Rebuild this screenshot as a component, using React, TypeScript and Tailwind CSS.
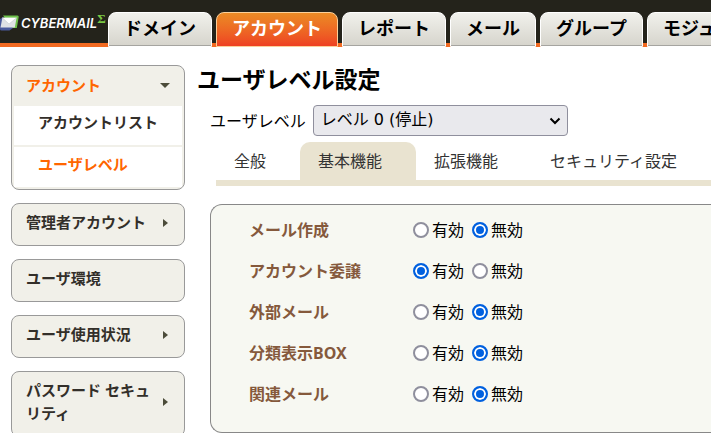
import { useState } from "react";

const mainTabs = ["ドメイン", "アカウント", "レポート", "メール", "グループ", "モジュール"];

const settingTabs = ["全般", "基本機能", "拡張機能", "セキュリティ設定"];

const sideMenus = [
  { label: "管理者アカウント", expandable: true },
  { label: "ユーザ環境", expandable: false },
  { label: "ユーザ使用状況", expandable: true },
  { label: "パスワード セキュリティ", expandable: true },
];

const features = [
  { id: "compose", label: "メール作成", enabled: false },
  { id: "delegate", label: "アカウント委譲", enabled: true },
  { id: "external", label: "外部メール", enabled: false },
  { id: "category", label: "分類表示BOX", enabled: false },
  { id: "related", label: "関連メール", enabled: false },
];

function Logo() {
  return (
    <a href="#" className="flex h-5 w-[106px] shrink-0 items-center text-white" aria-label="CYBERMAIL Σ">
      <svg viewBox="0 0 19 16" className="h-4 w-[19px] shrink-0" aria-hidden="true">
        <path d="M3 0.5H17.5Q19 0.5 18.7 2L16.8 13H12Z" fill="#6cc04a" />
        <path d="M0 4L3 2L13 13L9.5 15.5H1.5Q0 15.5 0 14Z" fill="#4a5a9c" />
        <path d="M2.4 2.8H16.6L14.8 12.6H0.5Z" fill="#dfe1e5" />
        <path d="M2.4 2.8H16.6L9 9Z" fill="#ffffff" />
        <path d="M2.4 2.8L9 9L16.6 2.8" fill="none" stroke="#c3c7ce" strokeWidth="0.6" />
      </svg>
      <span className="ml-0.5 font-['Inter',sans-serif] text-[13px] leading-5 font-semibold italic">CYBERMAIL</span>
      <span className="mb-2 font-['Liberation_Serif',serif] text-[13px] leading-3 font-bold text-[#7ac943]">Σ</span>
    </a>
  );
}

function Header() {
  return (
    <header className="flex h-[47px] items-end overflow-hidden bg-[linear-gradient(#24231b_43px,#f26a21_43px)]">
      <div className="mb-3.5 shrink-0">
        <Logo />
      </div>
      <nav className="ml-0.5 flex shrink-0 gap-1">
        {mainTabs.map((tab, i) => (
          <a
            key={tab}
            href="#"
            className={
              i === 1
                ? "flex h-[35px] items-center rounded-t-lg border border-[#fbd09a] bg-linear-to-b from-[#ea8a25] to-[#ee4023] px-[15px] pb-1 text-lg font-bold text-white"
                : "flex h-[35px] items-center rounded-t-lg border border-white bg-linear-to-b from-[#f1f1ec] to-[#d6d4cc] px-[15px] pb-1 text-lg font-bold text-black shadow-[inset_0_-1px_0_#a5a4a0]"
            }
          >
            {tab}
          </a>
        ))}
      </nav>
    </header>
  );
}

function Sidebar() {
  return (
    <aside className="flex w-[174px] shrink-0 flex-col gap-[13px] text-[15px] font-bold text-[#332f2a]">
      <div className="rounded-lg border border-[#999] bg-[#f1f0e9] px-0.5 pb-0.5">
        <button type="button" aria-expanded="true" className="flex h-10 w-full items-center justify-between pr-3 pb-0.5 pl-3 text-left text-[#ff6600]">
          アカウント
          <svg viewBox="0 0 10 5" className="h-[5px] w-2.5" aria-hidden="true">
            <path d="M0 0H10L5 5Z" fill="#4c4c3a" />
          </svg>
        </button>
        <ul className="flex flex-col gap-0.5">
          <li>
            <a href="#" className="flex h-[39px] items-center bg-white pb-1.5 pl-6">アカウントリスト</a>
          </li>
          <li>
            <a href="#" className="flex h-10 items-center bg-white pb-1.5 pl-6 text-[#ff6600]">ユーザレベル</a>
          </li>
        </ul>
      </div>
      {sideMenus.map((menu) => (
        <button
          key={menu.label}
          type="button"
          className="flex w-full items-center justify-between rounded-lg border border-[#999] bg-[#f1f0e9] pt-[7px] pr-4 pb-[11px] pl-3.5 text-left leading-[23px]"
        >
          <span className="w-[130px]">{menu.label}</span>
          {menu.expandable && (
            <svg viewBox="0 0 5 8" className="h-2 w-[5px] shrink-0" aria-hidden="true">
              <path d="M0 0L5 4L0 8Z" fill="#4c4c3a" />
            </svg>
          )}
        </button>
      ))}
    </aside>
  );
}

const radioClass =
  "size-4 appearance-none rounded-full border-2 border-[#8f8f9d] bg-white checked:border-[#0060df] checked:bg-[#0060df] checked:shadow-[inset_0_0_0_2px_#fff]";

function FeatureRow({ id, label, initial }: { id: string; label: string; initial: boolean }) {
  const [enabled, setEnabled] = useState(initial);
  return (
    <div role="radiogroup" aria-labelledby={id} className="flex h-[41px] items-center">
      <span id={id} className="w-[164px] shrink-0 font-bold text-[#85593c]">{label}</span>
      <div className="flex gap-2">
        <label className="flex items-center gap-[3px]">
          <input type="radio" name={id} checked={enabled} onChange={() => setEnabled(true)} className={radioClass} />
          有効
        </label>
        <label className="flex items-center gap-[3px]">
          <input type="radio" name={id} checked={!enabled} onChange={() => setEnabled(false)} className={radioClass} />
          無効
        </label>
      </div>
    </div>
  );
}

export default function App() {
  return (
    <div className="h-screen overflow-hidden bg-white font-['Noto_Sans','Noto_Sans_CJK_JP',sans-serif] text-base text-black">
      <Header />
      <div className="flex pl-[11px]">
        <div className="pt-[18px]">
          <Sidebar />
        </div>
        <main className="min-w-0 flex-1 pt-[15px] pl-3">
          <h1 className="text-[23px] leading-[34px] font-bold">ユーザレベル設定</h1>
          <div className="mt-[9px] flex items-center gap-[7px] pl-[13px]">
            <label htmlFor="level" className="shrink-0">ユーザレベル</label>
            <div className="relative w-[255px]">
              <select
                id="level"
                className="h-[31px] w-full appearance-none rounded border border-[#8f8f9d] bg-[#e9e9ed] pr-8 pb-0.5 pl-[7px] font-['DejaVu_Sans','Noto_Sans_CJK_JP',sans-serif]"
              >
                <option>レベル 0 (停止)</option>
              </select>
              <svg viewBox="0 0 12 8" className="pointer-events-none absolute top-3 right-[7px] h-2 w-3" aria-hidden="true">
                <path d="M1.5 1.5L6 6L10.5 1.5" fill="none" stroke="#000" strokeWidth="2" />
              </svg>
            </div>
          </div>
          <nav className="mt-1.5 ml-[19px] flex overflow-hidden border-b-[6px] border-[#e9e3d0]">
            {settingTabs.map((tab, i) => (
              <a
                key={tab}
                href="#"
                className={
                  i === 1
                    ? "flex h-[38px] shrink-0 items-center rounded-t-[10px] bg-[#e9e3d0] pr-[34px] pl-[18px] text-[#333]"
                    : "flex h-[38px] shrink-0 items-center pr-[34px] pl-[18px] text-[#333]"
                }
              >
                {tab}
              </a>
            ))}
          </nav>
          <section className="mt-[18px] ml-[13px] rounded-l-xl border border-r-0 border-[#888] bg-[#f7f8f2] pt-1 pb-[18px] pl-[38px]">
            {features.map((f) => (
              <FeatureRow key={f.id} id={f.id} label={f.label} initial={f.enabled} />
            ))}
          </section>
        </main>
      </div>
    </div>
  );
}
